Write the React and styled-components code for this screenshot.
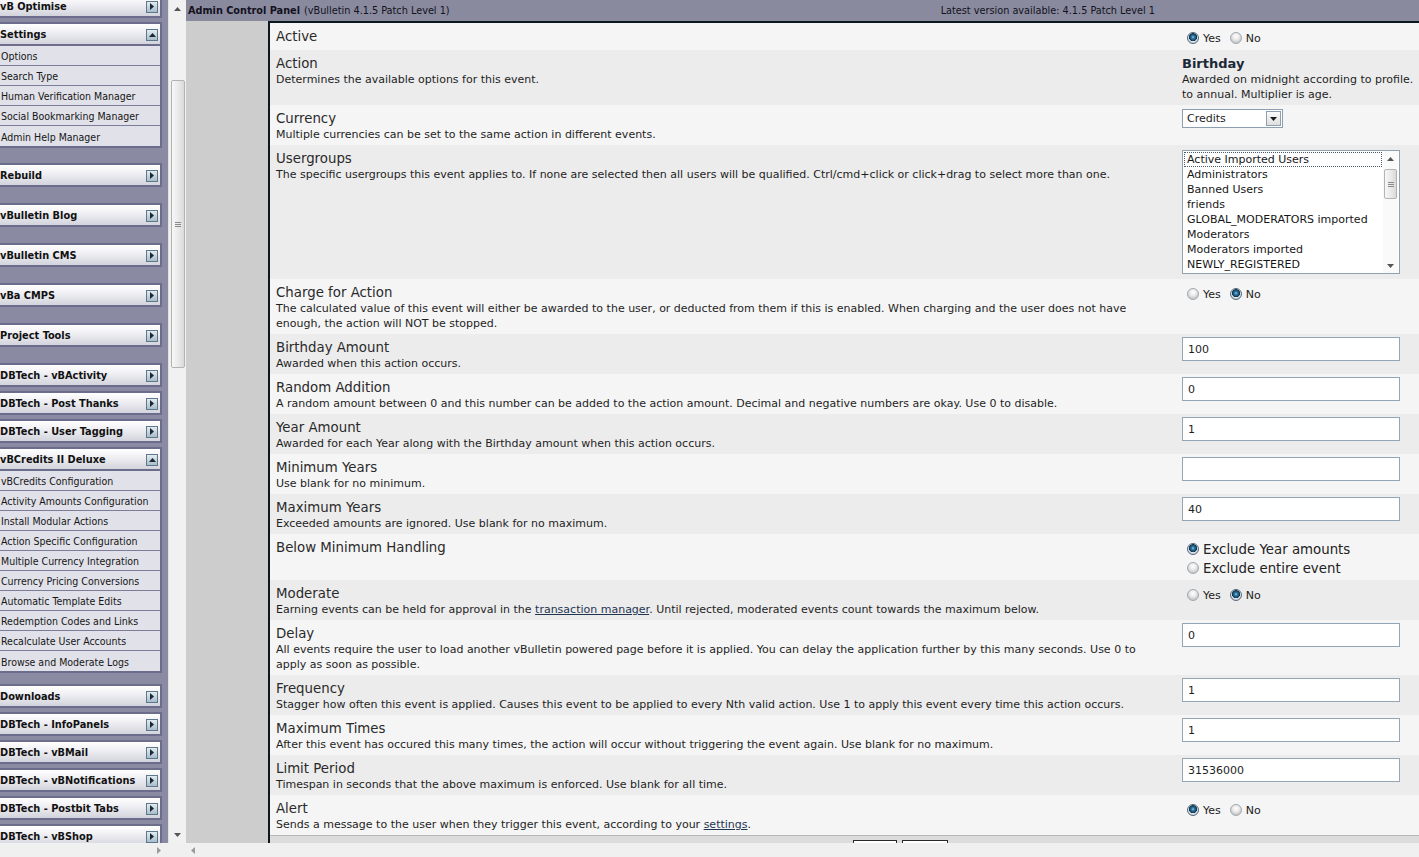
import React from 'react';
import styled, { createGlobalStyle } from 'styled-components';

const GlobalStyle = createGlobalStyle`
  html, body { margin: 0; padding: 0; width: 1419px; height: 857px; overflow: hidden; background: #f0f0f0; }
  #root { width: 1419px; height: 857px; }
  * { box-sizing: border-box; }
`;

const SANS = `"DejaVu Sans", Verdana, sans-serif`;
const COND = `"DejaVu Sans Condensed", "DejaVu Sans", sans-serif`;

const Page = styled.div`
  display: flex;
  width: 1419px;
  height: 857px;
  overflow: hidden;
`;

/* ---------- left frame ---------- */
const LeftFrame = styled.div`
  width: 186px;
  flex: none;
  display: grid;
  grid-template-columns: 168px 18px;
  grid-template-rows: 843px 14px;
  background: #f0f0f0;
`;

const NavPane = styled.div`
  grid-row: 1;
  grid-column: 1;
  background: #8a8ba2;
  overflow: hidden;
`;

const NavList = styled.div`
  margin: -6px 0 0 -6px;
  width: 168px;
  display: flex;
  flex-direction: column;
`;

const NavGroup = styled.div`
  margin-bottom: ${p => p.$gap}px;
`;

const NavHeader = styled.div`
  height: 24px;
  border: 2px solid #6c6c8c;
  background: linear-gradient(#ffffff 0%, #f2f2f6 35%, #d3d3dc 100%);
  display: flex;
  align-items: center;
  justify-content: space-between;
  padding: 1px 2px 0 4px;
  font: bold 10.9px ${COND};
  font-stretch: condensed;
  color: #111;
  white-space: nowrap;
`;

const NavToggle = styled.span`
  width: 12px;
  height: 12px;
  flex: none;
  border: 1px solid #5f778a;
  background: linear-gradient(#e2ecf1, #a7bdcb);
  display: flex;
  align-items: center;
  justify-content: center;
`;

const NavItems = styled.div`
  border: 2px solid #6c6c8c;
  border-top: none;
  background: #e1e1e9;
`;

const NavItem = styled.div`
  height: 20px;
  padding: 1px 0 0 5px;
  display: flex;
  align-items: center;
  border-bottom: 1px solid #7d7d9b;
  font: 10.5px ${COND};
  font-stretch: condensed;
  color: #161616;
  white-space: nowrap;
  &:last-child { border-bottom: none; }
`;

const VScroll = styled.div`
  grid-row: 1;
  grid-column: 2;
  display: flex;
  flex-direction: column;
  background: #f1f1f1;
  border-left: 1px solid #e2e2e2;
`;

const ScrollArrow = styled.div`
  height: 17px;
  flex: none;
  display: flex;
  align-items: center;
  justify-content: center;
`;

const Track = styled.div`
  flex: 1;
  display: flex;
  flex-direction: column;
  align-items: center;
`;

const Thumb = styled.div`
  margin-top: ${p => p.$offset}px;
  height: ${p => p.$size}px;
  width: ${p => p.$w || 14}px;
  flex: none;
  border: 1px solid #b3b3b3;
  border-radius: 2px;
  background: linear-gradient(90deg, #f7f7f7, #e9e9e9 55%, #dadada);
  display: flex;
  align-items: center;
  justify-content: center;
`;

const Grip = styled.span`
  width: 6px;
  height: 5px;
  border-top: 1px solid #8a8a8a;
  border-bottom: 1px solid #8a8a8a;
  position: relative;
  &::after {
    content: '';
    position: absolute;
    left: 0;
    right: 0;
    top: 1px;
    border-top: 1px solid #8a8a8a;
  }
`;

const HScroll = styled.div`
  display: flex;
  align-items: center;
  justify-content: ${p => (p.$end ? 'flex-end' : 'flex-start')};
  padding: ${p => (p.$end ? '0 7px 0 0' : '0 0 0 5px')};
  background: #f0f0f0;
  height: 14px;
`;

const Corner = styled.div`
  grid-row: 2;
  grid-column: 2;
  background: #f0f0f0;
`;

/* ---------- right frame ---------- */
const RightFrame = styled.div`
  flex: 1;
  min-width: 0;
  display: grid;
  grid-template-rows: 21px 822px 14px;
  overflow: hidden;
`;

const TopBar = styled.div`
  background: #8a8a9e;
  display: flex;
  align-items: center;
  padding: 0 264px 0 2px;
  font: 10.8px ${COND};
  font-stretch: condensed;
  color: #121220;
  white-space: nowrap;
  b { font-weight: bold; margin-right: 4px; }
`;

const TopRight = styled.span`
  margin-left: auto;
`;

const Body = styled.div`
  display: flex;
  background: #cdcdcd;
  overflow: hidden;
`;

const Gutter = styled.div`
  width: 82px;
  flex: none;
`;

const Table = styled.div`
  width: 1262px;
  flex: none;
  border-left: 2px solid #0d1720;
  border-top: 2px solid #0d1720;
  display: flex;
  flex-direction: column;
`;

const Row = styled.div`
  display: grid;
  grid-template-columns: 907px 353px;
  background: ${p => (p.$alt ? '#ececec' : '#f5f5f5')};
`;

const LabelCell = styled.div`
  padding: 5px 6px 3px;
`;

const ValueCell = styled.div`
  padding: 5px 5px 3px;
`;

const Title = styled.div`
  font: 13.33px/17px ${SANS};
  color: #2a2a2a;
`;

const Desc = styled.div`
  font: 11px/15px ${SANS};
  color: #1e1e1e;
`;

const Link = styled.a`
  color: #1f3552;
  text-decoration: underline;
`;

const Strong = styled.div`
  font: bold 13px/17px ${SANS};
  color: #1b2836;
`;

const ValueText = styled.div`
  font: 11px/15px ${SANS};
  color: #1e1e1e;
  white-space: nowrap;
`;

const RadioRow = styled.div`
  display: flex;
  align-items: center;
  height: 19px;
  padding-top: 1px;
  font: ${p => (p.$big ? '13.33px' : '11px')} ${SANS};
  color: #222;
  white-space: nowrap;
`;

const RadioOption = styled.label`
  display: flex;
  align-items: center;
  margin-right: 4px;
`;

const RadioDot = styled.span`
  width: 12px;
  height: 12px;
  flex: none;
  margin: 0 4px 0 5px;
  border-radius: 50%;
  border: 1px solid ${p => (p.$on ? '#56687a' : '#a0a9b1')};
  background: ${p =>
    p.$on
      ? 'radial-gradient(circle at 50% 42%, #9fd0ea 0, #2f7aa6 1.4px, #164868 3.2px, #0f3048 3.8px, #dfe6ea 4.3px, #c4ccd2 6px)'
      : 'radial-gradient(circle at 50% 35%, #ffffff 0, #ececec 3px, #c9c9c9 6px)'};
`;

const TextInput = styled.input`
  display: block;
  width: 218px;
  height: 24px;
  margin-top: -2px;
  border: 1px solid #93a6b6;
  background: #fff;
  padding: 0 5px;
  font: 11px ${SANS};
  color: #1e1e1e;
  outline: none;
`;

const SelectBox = styled.div`
  width: 101px;
  height: 19px;
  margin-top: -1px;
  border: 1px solid #8d9fae;
  background: #fff;
  display: flex;
  align-items: center;
  justify-content: space-between;
  padding: 0 1px 0 4px;
  font: 11px ${SANS};
  color: #1e1e1e;
`;

const SelectButton = styled.span`
  width: 15px;
  height: 15px;
  border: 1px solid #8d9fae;
  background: linear-gradient(#fbfbfb, #dedede);
  display: flex;
  align-items: center;
  justify-content: center;
`;

const ListBox = styled.div`
  width: 218px;
  height: 124px;
  margin: 0 0 2px;
  border: 1px solid #8fa2b2;
  background: #fff;
  display: flex;
`;

const ListItems = styled.div`
  flex: 1;
  padding: 1px 1px 0;
`;

const ListItem = styled.div`
  height: 15px;
  padding-left: 3px;
  font: 11px/15px ${SANS};
  color: #161616;
  white-space: nowrap;
  outline: ${p => (p.$focus ? '1px dotted #4a5a6a' : 'none')};
  outline-offset: -1px;
`;

const ListScroll = styled.div`
  width: 15px;
  flex: none;
  display: flex;
  flex-direction: column;
  align-items: center;
  margin: 0 1px 0 0;
  background: #fafafa;
`;

const ListArrow = styled.div`
  height: 15px;
  flex: none;
  display: flex;
  align-items: center;
  justify-content: center;
`;

const Footer = styled.div`
  flex: 1;
  border-top: 1px solid #b7b7b7;
  background: #dcdcdc;
  display: flex;
  justify-content: center;
  gap: 5px;
  padding-top: 4px;
  overflow: hidden;
`;

const FooterButton = styled.span`
  width: ${p => p.$w}px;
  height: 20px;
  flex: none;
  border: 1px solid #2a2a2a;
  background: #fff;
`;

/* ---------- drawings ---------- */
const Tri = ({ dir = 'right', color = '#1b2733', size = 7 }) => {
  const s = size;
  const h = Math.round(s * 0.6);
  const pts = {
    right: `0,0 ${h},${s / 2} 0,${s}`,
    left: `${h},0 0,${s / 2} ${h},${s}`,
    up: `0,${h} ${s / 2},0 ${s},${h}`,
    down: `0,0 ${s},0 ${s / 2},${h}`,
  }[dir];
  const horiz = dir === 'left' || dir === 'right';
  return (
    <svg width={horiz ? h : s} height={horiz ? s : h} viewBox={`0 0 ${horiz ? h : s} ${horiz ? s : h}`}>
      <polygon points={pts} fill={color} />
    </svg>
  );
};

const NAV = [
  { title: 'vB Optimise', gap: 4 },
  {
    title: 'Settings',
    gap: 15,
    items: ['Options', 'Search Type', 'Human Verification Manager', 'Social Bookmarking Manager', 'Admin Help Manager'],
  },
  { title: 'Rebuild', gap: 16 },
  { title: 'vBulletin Blog', gap: 16 },
  { title: 'vBulletin CMS', gap: 16 },
  { title: 'vBa CMPS', gap: 16 },
  { title: 'Project Tools', gap: 16 },
  { title: 'DBTech - vBActivity', gap: 4 },
  { title: 'DBTech - Post Thanks', gap: 4 },
  { title: 'DBTech - User Tagging', gap: 4 },
  {
    title: 'vBCredits II Deluxe',
    gap: 11,
    items: [
      'vBCredits Configuration',
      'Activity Amounts Configuration',
      'Install Modular Actions',
      'Action Specific Configuration',
      'Multiple Currency Integration',
      'Currency Pricing Conversions',
      'Automatic Template Edits',
      'Redemption Codes and Links',
      'Recalculate User Accounts',
      'Browse and Moderate Logs',
    ],
  },
  { title: 'Downloads', gap: 4 },
  { title: 'DBTech - InfoPanels', gap: 4 },
  { title: 'DBTech - vBMail', gap: 4 },
  { title: 'DBTech - vBNotifications', gap: 4 },
  { title: 'DBTech - Postbit Tabs', gap: 4 },
  { title: 'DBTech - vBShop', gap: 4 },
];

const USERGROUPS = [
  'Active Imported Users',
  'Administrators',
  'Banned Users',
  'friends',
  'GLOBAL_MODERATORS imported',
  'Moderators',
  'Moderators imported',
  'NEWLY_REGISTERED',
];

const YesNo = ({ yes }) => (
  <RadioRow>
    <RadioOption>
      <RadioDot $on={yes} />
      Yes
    </RadioOption>
    <RadioOption>
      <RadioDot $on={!yes} />
      No
    </RadioOption>
  </RadioRow>
);

const Input = ({ value }) => <TextInput defaultValue={value} readOnly />;

const ROWS = [
  { title: 'Active', value: <YesNo yes /> },
  {
    title: 'Action',
    desc: 'Determines the available options for this event.',
    value: (
      <>
        <Strong>Birthday</Strong>
        <ValueText>
          Awarded on midnight according to profile.
          <br />
          to annual. Multiplier is age.
        </ValueText>
      </>
    ),
  },
  {
    title: 'Currency',
    desc: 'Multiple currencies can be set to the same action in different events.',
    value: (
      <SelectBox>
        Credits
        <SelectButton>
          <Tri dir="down" size={7} color="#1a1a1a" />
        </SelectButton>
      </SelectBox>
    ),
  },
  {
    title: 'Usergroups',
    desc: 'The specific usergroups this event applies to. If none are selected then all users will be qualified. Ctrl/cmd+click or click+drag to select more than one.',
    value: (
      <ListBox>
        <ListItems>
          {USERGROUPS.map((g, i) => (
            <ListItem key={g} $focus={i === 0}>
              {g}
            </ListItem>
          ))}
        </ListItems>
        <ListScroll>
          <ListArrow>
            <Tri dir="up" size={7} color="#555" />
          </ListArrow>
          <Thumb $offset={3} $size={30} $w={13}>
            <Grip />
          </Thumb>
          <Track />
          <ListArrow>
            <Tri dir="down" size={7} color="#555" />
          </ListArrow>
        </ListScroll>
      </ListBox>
    ),
  },
  {
    title: 'Charge for Action',
    desc: (
      <>
        The calculated value of this event will either be awarded to the user, or deducted from them if this is
        enabled. When charging and the user does not have
        <br />
        enough, the action will NOT be stopped.
      </>
    ),
    value: <YesNo yes={false} />,
  },
  { title: 'Birthday Amount', desc: 'Awarded when this action occurs.', value: <Input value="100" /> },
  {
    title: 'Random Addition',
    desc: 'A random amount between 0 and this number can be added to the action amount. Decimal and negative numbers are okay. Use 0 to disable.',
    value: <Input value="0" />,
  },
  {
    title: 'Year Amount',
    desc: 'Awarded for each Year along with the Birthday amount when this action occurs.',
    value: <Input value="1" />,
  },
  { title: 'Minimum Years', desc: 'Use blank for no minimum.', value: <Input value="" /> },
  {
    title: 'Maximum Years',
    desc: 'Exceeded amounts are ignored. Use blank for no maximum.',
    value: <Input value="40" />,
  },
  {
    title: 'Below Minimum Handling',
    value: (
      <>
        <RadioRow $big>
          <RadioOption>
            <RadioDot $on />
            Exclude Year amounts
          </RadioOption>
        </RadioRow>
        <RadioRow $big>
          <RadioOption>
            <RadioDot />
            Exclude entire event
          </RadioOption>
        </RadioRow>
      </>
    ),
  },
  {
    title: 'Moderate',
    desc: (
      <>
        Earning events can be held for approval in the <Link href="#">transaction manager</Link>. Until rejected,
        moderated events count towards the maximum below.
      </>
    ),
    value: <YesNo yes={false} />,
  },
  {
    title: 'Delay',
    desc: (
      <>
        All events require the user to load another vBulletin powered page before it is applied. You can delay the
        application further by this many seconds. Use 0 to
        <br />
        apply as soon as possible.
      </>
    ),
    value: <Input value="0" />,
  },
  {
    title: 'Frequency',
    desc: 'Stagger how often this event is applied. Causes this event to be applied to every Nth valid action. Use 1 to apply this event every time this action occurs.',
    value: <Input value="1" />,
  },
  {
    title: 'Maximum Times',
    desc: 'After this event has occured this many times, the action will occur without triggering the event again. Use blank for no maximum.',
    value: <Input value="1" />,
  },
  {
    title: 'Limit Period',
    desc: 'Timespan in seconds that the above maximum is enforced. Use blank for all time.',
    value: <Input value="31536000" />,
  },
  {
    title: 'Alert',
    desc: (
      <>
        Sends a message to the user when they trigger this event, according to your <Link href="#">settings</Link>.
      </>
    ),
    value: <YesNo yes />,
  },
];

export default function App() {
  return (
    <Page>
      <GlobalStyle />
      <LeftFrame>
        <NavPane>
          <NavList>
            {NAV.map(g => (
              <NavGroup key={g.title} $gap={g.gap}>
                <NavHeader>
                  {g.title}
                  <NavToggle>
                    <Tri dir={g.items ? 'up' : 'right'} size={7} />
                  </NavToggle>
                </NavHeader>
                {g.items && (
                  <NavItems>
                    {g.items.map(it => (
                      <NavItem key={it}>{it}</NavItem>
                    ))}
                  </NavItems>
                )}
              </NavGroup>
            ))}
          </NavList>
        </NavPane>
        <VScroll>
          <ScrollArrow>
            <Tri dir="up" size={7} color="#555" />
          </ScrollArrow>
          <Track>
            <Thumb $offset={63} $size={288}>
              <Grip />
            </Thumb>
          </Track>
          <ScrollArrow>
            <Tri dir="down" size={7} color="#555" />
          </ScrollArrow>
        </VScroll>
        <HScroll $end>
          <Tri dir="right" size={7} color="#9a9a9a" />
        </HScroll>
        <Corner />
      </LeftFrame>

      <RightFrame>
        <TopBar>
          <b>Admin Control Panel</b>(vBulletin 4.1.5 Patch Level 1)
          <TopRight>Latest version available: 4.1.5 Patch Level 1</TopRight>
        </TopBar>
        <Body>
          <Gutter />
          <Table>
            {ROWS.map((r, i) => (
              <Row key={r.title} $alt={i % 2 === 1}>
                <LabelCell>
                  <Title>{r.title}</Title>
                  {r.desc && <Desc>{r.desc}</Desc>}
                </LabelCell>
                <ValueCell>{r.value}</ValueCell>
              </Row>
            ))}
            <Footer>
              <FooterButton $w={44} />
              <FooterButton $w={46} />
            </Footer>
          </Table>
        </Body>
        <HScroll>
          <Tri dir="left" size={7} color="#9a9a9a" />
        </HScroll>
      </RightFrame>
    </Page>
  );
}
